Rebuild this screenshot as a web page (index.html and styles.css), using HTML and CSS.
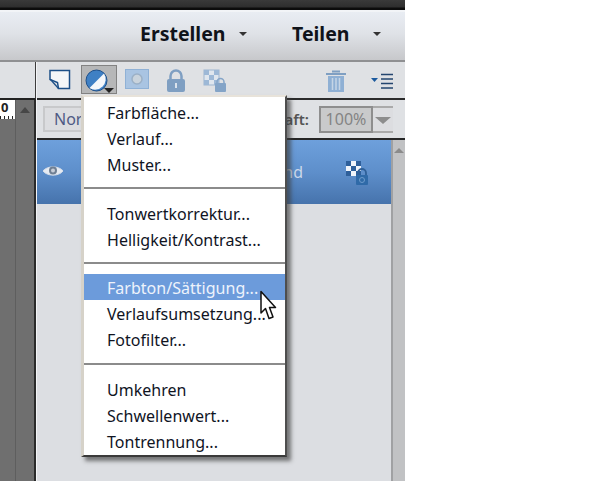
FILE: index.html
```html
<!DOCTYPE html>
<html lang="de">
<head>
<meta charset="utf-8">
<title>Ebenen</title>
<link rel="stylesheet" href="styles.css">
</head>
<body>
<div class="app">
  <div class="topbar"></div>
  <header class="header">
    <div class="hbtn erstellen"><span>Erstellen</span><i class="caret"></i></div>
    <div class="hbtn teilen"><span>Teilen</span><i class="caret"></i></div>
  </header>
  <div class="main">
    <aside class="left">
      <div class="left-top"></div>
      <div class="left-canvas">
        <div class="canvas-col">
          <div class="ruler"><span class="ruler-num">0</span></div>
        </div>
        <div class="canvas-bar"><i class="up-dark"></i></div>
      </div>
    </aside>
    <section class="panel">
      <div class="tools">
        <svg class="ico new" width="22" height="22" viewBox="0 0 22 22"><path d="M1 2.500H20.500V20.500H9.500L8.500 14.500L1 11.500Z" fill="#f4f6f8" stroke="#1c4f87" stroke-width="1.500"/><path d="M1.500 11.500L9.500 20.500" stroke="#1c4f87" stroke-width="1.300"/></svg>
        <div class="adj">
          <svg width="24" height="24" viewBox="0 0 24 24"><circle cx="11.500" cy="11.500" r="10.500" fill="#3f80c4" stroke="#1d4f8a" stroke-width="1"/><path d="M19 4.500A10.500 10.500 0 0 1 4.500 19Z" fill="#f5f7fa"/></svg>
          <i class="adj-caret"></i>
        </div>
        <svg class="ico mask" width="24" height="20" viewBox="0 0 24 20"><rect x="0.500" y="0.500" width="23" height="19" fill="#a9c4e2" stroke="#8fb1d6"/><circle cx="12" cy="10" r="5" fill="#c9d3dc" stroke="#9bb0c6" stroke-width="1.500"/></svg>
        <svg class="ico lock" width="20" height="23" viewBox="0 0 20 23"><path d="M4.500 11V7a5.500 5.500 0 0 1 11 0v4" fill="none" stroke="#7f9fc2" stroke-width="2.500"/><rect x="1" y="10" width="18" height="13" rx="2" fill="#7f9fc2"/><rect x="9" y="14" width="2" height="5" fill="#dbe3ec"/></svg>
        <svg class="ico locktr" width="24" height="24" viewBox="0 0 24 24"><rect x="1" y="1" width="15" height="15" fill="#dfe6ee" stroke="#9db5cf"/><path d="M1 1h5v5H1zM11 1h5v5h-5zM6 6h5v5H6zM1 11h5v5H1zM11 11h5v5h-5z" fill="#9db8d6"/><path d="M14 15v-2a3.500 3.500 0 0 1 7 0v2" fill="none" stroke="#84a4c7" stroke-width="1.500"/><rect x="12" y="14" width="11" height="9" rx="1" fill="#84a4c7"/></svg>
        <svg class="ico trash" width="22" height="24" viewBox="0 0 22 24"><path d="M7 2.500h8M1 5h20" stroke="#7f9fc2" stroke-width="2"/><rect x="3" y="7" width="16" height="16" fill="#8fb0d4"/><path d="M7.500 9v12M11 9v12M14.500 9v12" stroke="#c5d5e6" stroke-width="1.500"/></svg>
        <svg class="ico menuic" width="23" height="16" viewBox="0 0 23 16"><path d="M0 5h7l-3.500 4Z" fill="#1c5a9e"/><path d="M10 1.500h12M10 6h12M10 10.500h12M10 15h12" stroke="#24466f" stroke-width="1.700"/></svg>
      </div>
      <div class="opts">
        <div class="blend">Normal</div>
        <div class="opac-label">Deckkraft:</div>
        <div class="opac"><span class="opac-val">100%</span><span class="opac-btn"><i class="opac-caret"></i></span></div>
      </div>
      <div class="list">
        <div class="listwrap">
          <div class="layer">
            <svg class="eye" width="22" height="14" viewBox="0 0 22 14"><path d="M1 7C5 1.500 17 1.500 21 7C17 12.500 5 12.500 1 7Z" fill="#e6ebf2" stroke="#d5dde8"/><circle cx="11" cy="6.500" r="4" fill="#6f7f93"/><circle cx="11" cy="6.500" r="2" fill="#c7ced8"/></svg>
            <span class="lname">Hintergrund</span>
            <svg class="llock" width="24" height="26" viewBox="0 0 24 26"><rect x="1" y="1" width="15" height="15" fill="#f0f4fa"/><path d="M1 1h5v5H1zM11 1h5v5h-5zM6 6h5v5H6zM1 11h5v5H1zM11 11h5v5h-5z" fill="#2e5f9a"/><path d="M13 16v-3a4 4 0 0 1 8 0v3" fill="none" stroke="#2f6098" stroke-width="1.800"/><rect x="11" y="15" width="12" height="10" rx="1" fill="#2f6aa8"/><circle cx="17" cy="20" r="2.500" fill="none" stroke="#6d9ccc"/></svg>
          </div>
        </div>
        <div class="scroll"><i class="up-light"></i></div>
      </div>
    </section>
  </div>
</div>
<nav class="menu">
  <ul class="group g1">
    <li>Farbfläche...</li>
    <li>Verlauf...</li>
    <li>Muster...</li>
  </ul>
  <ul class="group g2">
    <li>Tonwertkorrektur...</li>
    <li>Helligkeit/Kontrast...</li>
  </ul>
  <ul class="group g3">
    <li class="active">Farbton/Sättigung...</li>
    <li>Verlaufsumsetzung...</li>
    <li>Fotofilter...</li>
  </ul>
  <ul class="group g4">
    <li>Umkehren</li>
    <li>Schwellenwert...</li>
    <li>Tontrennung...</li>
  </ul>
</nav>
<svg class="cursor" width="18" height="31" viewBox="0 0 18 31"><path d="M2 1.500V23L6.500 18.500L10 28.500L14 27L10.500 17.500H16.500Z" fill="#fff" stroke="#111" stroke-width="1.500" stroke-linejoin="round"/></svg>
</body>
</html>
```
FILE: styles.css
```css
* { box-sizing: border-box; }
html, body { margin: 0; padding: 0; background: #fff; }
body { width: 600px; height: 481px; overflow: hidden; position: relative; font-family: "Noto Sans", "Open Sans", sans-serif; }
i { display: block; }
.app { width: 405px; height: 481px; display: flex; flex-direction: column; background: #dcdee2; }
.topbar { height: 10px; background: linear-gradient(#3a3a3a 0, #2e2e2e 7px, #0c0c0c 8px); flex: none; }
.header { height: 52px; flex: none; display: flex; align-items: center; padding-bottom: 5px; background: linear-gradient(#e9edf3 0, #dfe2e7 45%, #c7c8cb 100%); border-top: 2px solid #f2f4f7; border-bottom: 2px solid #8f9092; }
.hbtn { display: flex; align-items: center; font-weight: 700; font-size: 19.500px; color: #10131a; }
.erstellen { margin-left: 140px; width: 152px; }
.erstellen span { width: 99px; }
.teilen span { width: 81px; }
.caret { width: 0; height: 0; border-left: 4px solid transparent; border-right: 4px solid transparent; border-top: 4px solid #333; }
.main { flex: 1; min-height: 0; display: flex; }
.left { width: 37px; flex: none; display: flex; flex-direction: column; border-right: 1px solid #f3f4f6; }
.left-top { height: 38px; background: #dfe1e4; border-right: 1px solid #3c3c3c; border-bottom: 2px solid #222; flex: none; }
.left-canvas { flex: 1; display: flex; background: #6f6f6f; border-right: 2px solid #2a2a2a; }
.canvas-col { width: 16px; flex: none; border-right: 1px solid #5e5e5e; }
.ruler { height: 19px; background: #fff; background-image: repeating-linear-gradient(90deg, #222 0 1px, transparent 1px 4px); background-size: 100% 3px; background-position: bottom; background-repeat: no-repeat; }
.ruler-num { display: block; font-size: 13px; line-height: 15px; padding-left: 1px; color: #222; font-weight: 700; background: #fff; width: 11px; }
.canvas-bar { flex: 1; display: flex; justify-content: center; padding-top: 7px; }
.up-dark { width: 0; height: 0; border-left: 5px solid transparent; border-right: 5px solid transparent; border-bottom: 6px solid #474747; }
.panel { flex: 1; min-width: 0; display: flex; flex-direction: column; }
.tools { height: 38px; flex: none; display: flex; align-items: flex-start; background: #dfe1e4; border-bottom: 2px solid #2b2b2b; padding: 3px 0 0 12px; }
.ico { flex: none; display: block; }
.new { margin-top: 3px; }
.adj { width: 36px; height: 29px; margin-left: 10px; background: #b6b7b8; border: 1px solid #828282; padding: 3px 0 0 3px; position: relative; flex: none; }
.adj svg { display: block; }
.adj-caret { position: absolute; right: 2px; bottom: 0; border-left: 5px solid transparent; border-right: 5px solid transparent; border-top: 5px solid #222; }
.mask { margin: 4px 0 0 8px; }
.lock { margin: 4px 0 0 17px; }
.locktr { margin: 4px 0 0 17px; }
.trash { margin: 4px 0 0 98px; }
.menuic { margin: 8px 0 0 24px; }
.opts { height: 40px; flex: none; display: flex; align-items: center; background: #dfe1e4; border-bottom: 2px solid #262626; padding: 0 0 0 6px; }
.blend { width: 110px; height: 26px; flex: none; border: 2px solid #c8c9cb; background: #dcdde0; font-size: 16px; line-height: 22px; padding-left: 9px; color: #4f5a85; overflow: hidden; white-space: nowrap; }
.opac-label { width: 156px; text-align: right; font-size: 15px; font-weight: 600; color: #555; flex: none; }
.opac { display: flex; margin-left: 10px; width: 74px; height: 27px; flex: none; }
.opac-val { width: 54px; border: 2px solid #8e8e8e; background: #c9cacb; font-size: 16px; line-height: 23px; text-align: center; color: #848484; }
.opac-btn { flex: 1; border-top: 2px solid #aaa; border-bottom: 2px solid #aaa; background: #dcdde0; display: flex; justify-content: center; padding-top: 9px; }
.opac-caret { width: 0; height: 0; border-left: 8px solid transparent; border-right: 8px solid transparent; border-top: 7px solid #8d8d8d; }
.list { flex: 1; display: flex; min-height: 0; }
.listwrap { flex: 1; min-width: 0; }
.layer { height: 64px; background: linear-gradient(#6ea0dc 0, #5e8fcb 50%, #4673ac 100%); display: flex; align-items: center; padding-left: 5px; }
.eye { flex: none; margin-bottom: 3px; }
.lname { width: 239px; flex: none; color: #cbd8ea; font-size: 16px; text-align: right; }
.llock { margin-left: 42px; flex: none; margin-top: 1px; }
.scroll { width: 14px; flex: none; background: #c1c2c4; border-left: 2px solid #a0a1a3; display: flex; justify-content: center; padding-top: 8px; }
.up-light { width: 0; height: 0; border-left: 5px solid transparent; border-right: 5px solid transparent; border-bottom: 5px solid #8b8b8b; }
.menu { position: absolute; left: 81px; top: 95px; width: 206px; height: 362px; background: #fff; border-left: 3px solid #d6d2c9; border-top: 2px solid #e8e3da; border-right: 2px solid #4e4e4e; border-bottom: 2px solid #3a3a3a; box-shadow: 4px 4px 4px rgba(60,60,60,.65); padding-top: 2px; }
.group { list-style: none; margin: 0; padding: 0; }
.group li { height: 26px; line-height: 28px; padding-left: 23px; font-size: 16px; letter-spacing: 0.02px; color: #10141f; white-space: nowrap; }
.g1 { padding-bottom: 10px; border-bottom: 2px solid #8b8b8b; }
.g2 { padding: 11px 0 10px; border-bottom: 2px solid #8b8b8b; }
.g3 { padding: 10px 0 11px; border-bottom: 2px solid #8b8b8b; }
.g4 { padding-top: 11px; }
.group li.active { background: #6c9bdb; color: #eef3fb; }
.cursor { position: absolute; left: 259px; top: 290px; }
```
